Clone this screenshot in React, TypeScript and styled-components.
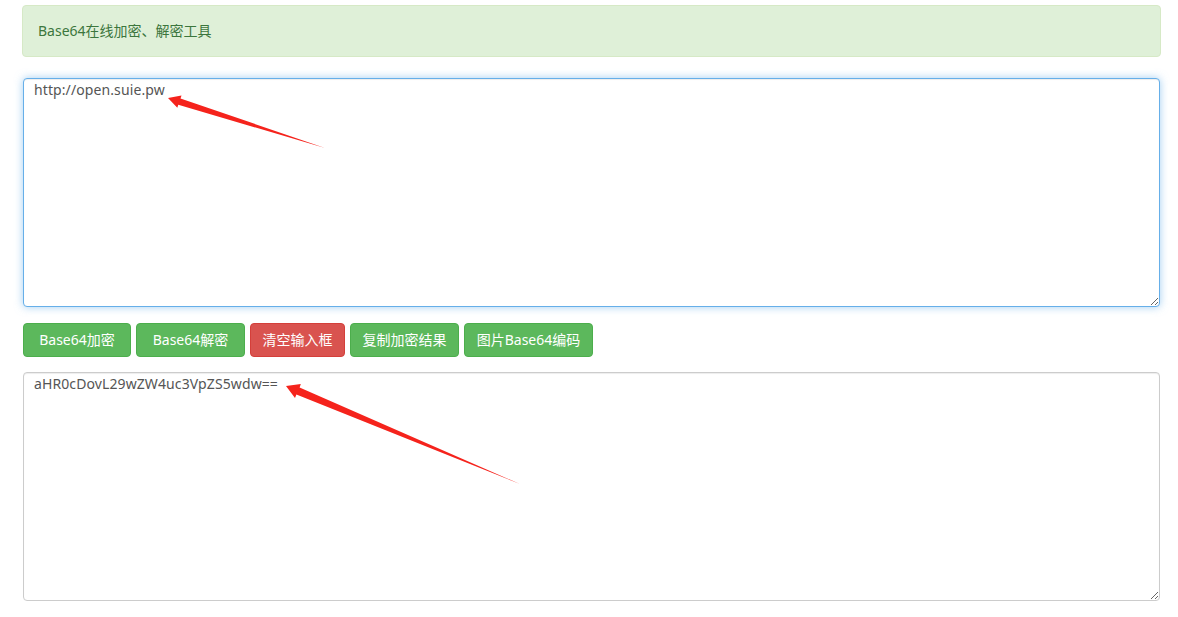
import React from "react";
import styled, { createGlobalStyle, css } from "styled-components";

const GlobalStyle = createGlobalStyle`
  html, body { margin: 0; padding: 0; background: #fff; }
  body {
    font-family: "Open Sans", "Noto Sans CJK SC", sans-serif;
    font-size: 14px;
    line-height: 1.42857;
    color: #333;
  }
  * { box-sizing: border-box; }
`;

const Page = styled.div`
  position: relative;
  width: 1178px;
  height: 617px;
  padding: 5px 17px 0 22px;
  display: flex;
  flex-direction: column;
`;

const Alert = styled.div`
  height: 52px;
  margin-bottom: 21px;
  padding: 15px;
  background: #dff0d8;
  border: 1px solid #d6e9c6;
  border-radius: 4px;
  color: #3c763d;
  font-size: 14px;
  line-height: 20px;
  font-family: "Noto Sans", "Noto Sans CJK SC", sans-serif;
`;

const TextArea = styled.textarea<{ $focused?: boolean }>`
  display: block;
  margin: 0 0 0 1px;
  width: 1137px;
  height: 229px;
  padding: 2px 10px 6px;
  font-family: "Noto Sans", "Noto Sans CJK SC", sans-serif;
  font-size: 14px;
  line-height: 18px;
  letter-spacing: 0.1px;
  color: #555;
  background: #fff;
  border: 1px solid #ccc;
  border-radius: 4px;
  box-shadow: inset 0 1px 1px rgba(0, 0, 0, 0.075);
  outline: none;
  resize: both;
  ${(p) =>
    p.$focused &&
    css`
      border-color: #66afe9;
      box-shadow: inset 0 1px 1px rgba(0, 0, 0, 0.075),
        0 0 8px rgba(102, 175, 233, 0.6);
    `}
`;

const Toolbar = styled.div`
  display: flex;
  gap: 5px;
  margin: 16px 0 15px 1px;
`;

const Button = styled.button<{ $danger?: boolean }>`
  height: 34px;
  padding: 6px 0;
  font-family: "Noto Sans", "Noto Sans CJK SC", sans-serif;
  font-size: 14px;
  line-height: 20px;
  color: #fff;
  border-radius: 4px;
  cursor: pointer;
  text-align: center;
  background: ${(p) => (p.$danger ? "#d9534f" : "#5cb85c")};
  border: 1px solid ${(p) => (p.$danger ? "#d43f3a" : "#4cae4c")};
  white-space: nowrap;
`;

const Overlay = styled.svg`
  position: absolute;
  left: 0;
  top: 0;
  pointer-events: none;
`;

const buttons = [
  { label: "Base64加密", w: 108 },
  { label: "Base64解密", w: 109 },
  { label: "清空输入框", w: 95, danger: true },
  { label: "复制加密结果", w: 109 },
  { label: "图片Base64编码", w: 129 },
];

export default function App() {
  return (
    <>
      <GlobalStyle />
      <Page>
        <Alert>Base64在线加密、解密工具</Alert>
        <TextArea $focused defaultValue="http://open.suie.pw" />
        <Toolbar>
          {buttons.map((b) => (
            <Button key={b.label} $danger={b.danger} style={{ width: b.w }}>
              {b.label}
            </Button>
          ))}
        </Toolbar>
        <TextArea defaultValue="aHR0cDovL29wZW4uc3VpZS5wdw==" />
        <Overlay width="1178" height="617" viewBox="0 0 1178 617">
          <polygon
            points="168,98 181.5,95.5 180.5,98.4 325,148 178.3,104.8 177.3,107.8"
            fill="#f5231c"
          />
          <polygon
            points="286,386 300.8,384 299.6,387.6 520,484 296.4,394.6 295,398"
            fill="#f5231c"
          />
        </Overlay>
      </Page>
    </>
  );
}
